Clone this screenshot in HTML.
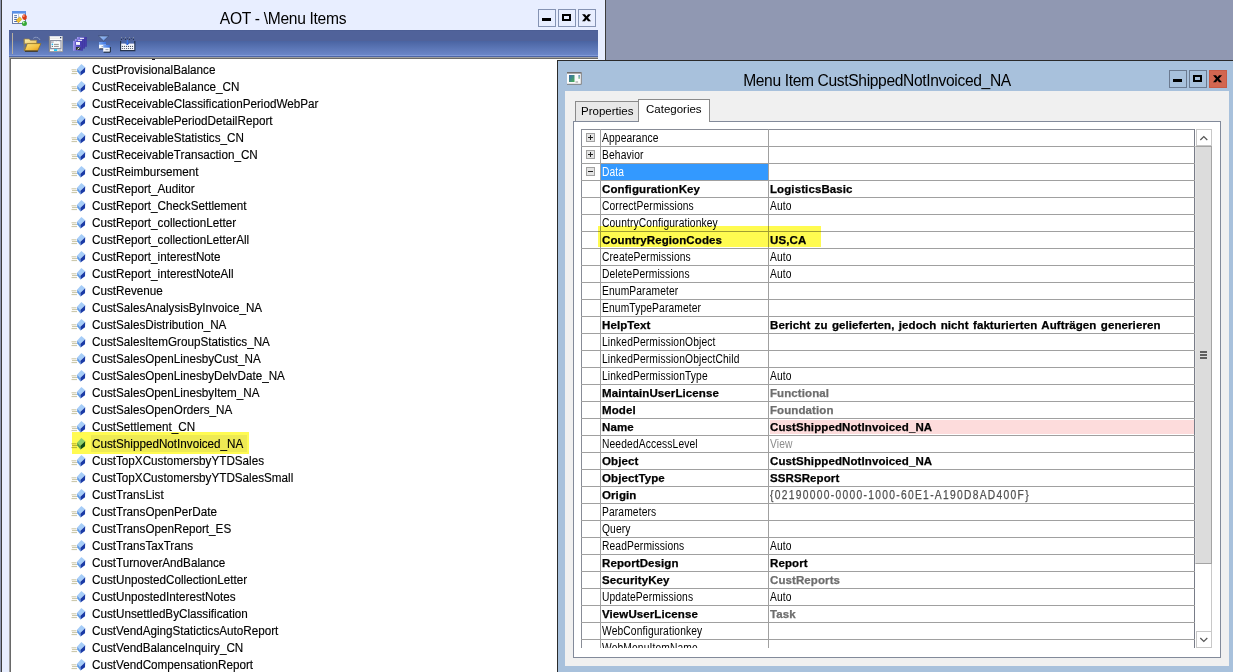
<!DOCTYPE html>
<html><head><meta charset="utf-8">
<style>
*{box-sizing:border-box}
html,body{margin:0;padding:0}
body{width:1233px;height:672px;overflow:hidden;position:relative;background:#9098b2;font-family:"Liberation Sans",sans-serif;}
div,span,svg{position:absolute}
.ic{display:block}
.li{position:absolute;left:92px;font-size:12.3px;letter-spacing:0px;transform:scaleX(0.95);transform-origin:0 0;-webkit-text-stroke:0.15px #000;line-height:17px;height:17px;white-space:nowrap;color:#000}
.g{position:absolute;font-size:12px;letter-spacing:0.15px;transform:scaleX(0.855);transform-origin:0 0;line-height:19px;height:17px;white-space:nowrap;color:#000}
.gb{font-weight:bold;font-size:11.5px;line-height:18px;letter-spacing:0.1px;word-spacing:1px;transform:none;-webkit-text-stroke:0.25px currentColor}
.gg{color:#6d6d6d}
.hl{position:absolute;left:0;width:1px;height:1px}
</style></head><body>

<div style="left:1px;top:0;width:605px;height:672px;background:#e8eeff;border-left:1px solid #3c3c3c;border-right:1px solid #3c3c3c"></div>
<svg style="left:8px;top:6px" width="24" height="24" viewBox="0 0 24 24">
<rect x="4.5" y="5.5" width="13" height="12" fill="#f6f9ff" stroke="#6a7ca8" stroke-width="1"/>
<rect x="4" y="5" width="14" height="2.6" fill="#5a90e8"/>
<rect x="5" y="8" width="5" height="9" fill="#ffffff"/>
<path d="M6.2 9.7h2.8M6.2 11.6h2.8M6.2 13.5h2.8M6.2 15.5h2.8" stroke="#4a6aa8" stroke-width="1"/>
<path d="M10.5 8v9" stroke="#b0bcd8" stroke-width="0.8"/>
<path d="M8.2 14.3L11.8 10.9L13.8 13.4L10.4 16.8Z" fill="#f0c030" stroke="#c89010" stroke-width="0.6"/>
<path d="M14.5 9.5q1.5-2 3 -0.5q2 0.5 1.2 2.5q0.5 2 -1.5 2.3q-1.8 0.5 -2.5 -1q-1.2-1.5 -0.2-3.3z" fill="#d83a18"/>
<circle cx="15.8" cy="10" r="0.9" fill="#f8a080"/>
<circle cx="16.4" cy="17.4" r="2.5" fill="#34a834"/>
<circle cx="15.6" cy="16.5" r="0.9" fill="#c8f0c0"/>
</svg>
<div style="left:0;top:9px;width:606px;text-align:center;font-size:15.6px;letter-spacing:-0.3px;line-height:20px;color:#000;padding-left:0px"><span style="position:static;margin-left:-40px">AOT - \Menu Items</span></div>
<div style="left:538px;top:9px;width:18px;height:18px;background:#e8eeff;border:1px solid #8593b3"><div style="left:3px;top:8px;width:9px;height:3px;background:#000"></div></div><div style="left:558px;top:9px;width:18px;height:18px;background:#e8eeff;border:1px solid #8593b3"><div style="left:3px;top:4px;width:9px;height:7px;border:2px solid #000;border-top-width:2px"></div></div><div style="left:578px;top:9px;width:18px;height:18px;background:#e8eeff;border:1px solid #8593b3"><svg style="left:3px;top:4px" width="9" height="8" viewBox="0 0 9 8"><path d="M0 0.2h3l1.5 2.1 1.5-2.1h3l-3 3.5 3 3.6h-3l-1.5-2.1-1.5 2.1h-3l3-3.6z" fill="#000"/></svg></div>
<div style="left:9px;top:30px;width:589px;height:27px;background:linear-gradient(#475a90 0px,#50629a 1px,#50629a 11px,#4a64a2 11px,#6b86c8 25px,#819ad8 25px,#819ad8 26px,#4e66a6 26px)"></div>
<div style="left:12px;top:33px;width:1px;height:21px;background:#b8b0a0"></div>
<svg style="left:23px;top:35px" width="20" height="18" viewBox="0 0 20 18">
<defs><linearGradient id="fb" x1="0" y1="0" x2="1" y2="1"><stop offset="0" stop-color="#fff4b0"/><stop offset="1" stop-color="#e8c060"/></linearGradient>
<linearGradient id="ff" x1="0" y1="0" x2="1" y2="1"><stop offset="0" stop-color="#fce680"/><stop offset="0.6" stop-color="#f4c040"/><stop offset="1" stop-color="#e09010"/></linearGradient></defs>
<path d="M10.5 3.2q2.5-2 5.5 0.3l0.8 1.2" stroke="#b8c4dc" fill="none" stroke-width="0.9" stroke-dasharray="1.2 0.8"/>
<path d="M1.2 4h5l1.2 1.3h6.3v3.5h-12.5z" fill="url(#fb)" stroke="#9c8448" stroke-width="0.7"/>
<path d="M1.2 4v11.8" stroke="#9c8448" stroke-width="0.8"/>
<path d="M1.5 15.8l2.8-7.2h13.6l-3.2 7.2z" fill="url(#ff)" stroke="#8a6a20" stroke-width="0.7"/>
<path d="M2 16.2h12.8" stroke="#302810" stroke-width="1"/>
</svg>
<svg style="left:48px;top:35px" width="16" height="18" viewBox="0 0 16 18">
<rect x="1" y="1.2" width="13.8" height="15.5" fill="#fbfbfb"/>
<path d="M1.3 1.2v15.5" stroke="#767676" stroke-width="1"/>
<path d="M14.5 1.2v15.5" stroke="#9a9a9a" stroke-width="0.8"/>
<path d="M1 16.6h13.8" stroke="#8a8a8a" stroke-width="0.8"/>
<path d="M2 3.2h11.5" stroke="#e4e4e4" stroke-width="1"/>
<rect x="12" y="2" width="1.3" height="1.3" fill="#304060"/>
<path d="M2.6 5.6h10.4v8h-10.4z" fill="none" stroke="#8c90a0" stroke-width="1.1"/>
<path d="M6.2 6.6h1.4M9.2 6.6h1.4" stroke="#ffffff" stroke-width="0.9"/>
<path d="M3.2 7.2h2.4" stroke="#8c90a0" stroke-width="0.9"/>
<circle cx="4.4" cy="9.4" r="0.8" fill="#18b8f8"/>
<circle cx="4.4" cy="11.4" r="0.6" fill="#707070"/>
<path d="M6 9.4h4.8M6 11.4h4.8" stroke="#909090" stroke-width="1"/>
<rect x="6" y="14.2" width="3.2" height="1.8" fill="#18c8f8"/>
<rect x="10.5" y="14.4" width="2.8" height="1.4" fill="#c8c8c8"/>
</svg>
<svg style="left:72px;top:36px" width="17" height="16" viewBox="0 0 17 16">
<defs><linearGradient id="fl" x1="0" y1="0" x2="1" y2="0"><stop offset="0" stop-color="#a8a0f0"/><stop offset="0.35" stop-color="#6a62d0"/><stop offset="1" stop-color="#3c34a0"/></linearGradient></defs>
<rect x="5" y="1" width="9.8" height="9.8" fill="url(#fl)"/>
<rect x="8" y="1.8" width="4" height="1.2" fill="#f4f4ff"/>
<rect x="2.9" y="2.9" width="10" height="9.7" fill="url(#fl)"/>
<rect x="6" y="3.8" width="4" height="1.2" fill="#f4f4ff"/>
<rect x="1" y="4.8" width="9.8" height="9.9" fill="url(#fl)"/>
<rect x="3.6" y="5.8" width="4.8" height="3.4" fill="#3a30b8"/>
<rect x="4" y="6" width="4" height="2.9" fill="#f4f4ff"/>
<rect x="4" y="11" width="4.3" height="2.9" fill="#303838"/>
<path d="M5.5 13.3l2-1.6" stroke="#e0e8e0" stroke-width="1"/>
</svg>
<svg style="left:97px;top:35px" width="15" height="18" viewBox="0 0 15 18">
<defs><linearGradient id="tb" x1="0" y1="0" x2="1" y2="1"><stop offset="0" stop-color="#a8c8f8"/><stop offset="1" stop-color="#5a88e0"/></linearGradient>
<linearGradient id="wt" x1="0" y1="0" x2="1" y2="0"><stop offset="0" stop-color="#7aa8f0"/><stop offset="1" stop-color="#3a70e0"/></linearGradient></defs>
<path d="M1.5 1h10.2l-5.1 5z" fill="url(#tb)" stroke="#34405c" stroke-width="0.6"/>
<rect x="2" y="7" width="7" height="6.8" fill="#f8faff"/>
<rect x="2" y="7" width="7" height="2.7" fill="url(#wt)"/>
<path d="M2.4 13.9h6.6" stroke="#1c2838" stroke-width="1"/>
<rect x="4.5" y="11" width="3" height="1.2" fill="#a8b0c0"/>
<rect x="6.2" y="10" width="6.8" height="6.8" fill="#f8faff"/>
<rect x="6.2" y="10" width="6.8" height="2.7" fill="url(#wt)"/>
<path d="M6.6 17.2h6.6M13.3 12v5.2" stroke="#1c2838" stroke-width="1"/>
<rect x="8.5" y="14" width="3" height="1.2" fill="#a8b0c0"/>
</svg>
<svg style="left:119px;top:36px" width="17" height="16" viewBox="0 0 17 16">
<circle cx="2.5" cy="1.5" r="0.6" fill="#8a94a8"/><circle cx="6.5" cy="1.5" r="0.6" fill="#8a94a8"/><circle cx="10.5" cy="1.5" r="0.6" fill="#8a94a8"/><circle cx="14.5" cy="1.5" r="0.6" fill="#8a94a8"/><circle cx="4.4" cy="2.5" r="0.6" fill="#3a4660"/><circle cx="8.4" cy="2.5" r="0.6" fill="#3a4660"/><circle cx="12.4" cy="2.5" r="0.6" fill="#3a4660"/><circle cx="2.5" cy="3.4" r="0.6" fill="#2a3650"/><circle cx="6.5" cy="3.4" r="0.6" fill="#2a3650"/><circle cx="10.5" cy="3.4" r="0.6" fill="#2a3650"/><circle cx="14.5" cy="3.4" r="0.6" fill="#2a3650"/>
<path d="M1.6 5v9.6h14.2v-9.6" fill="none" stroke="#26344e" stroke-width="1.2"/>
<rect x="2.2" y="7.6" width="13" height="6.4" fill="#f4f6fc"/>
<path d="M8.4 4v4.6" stroke="#3a78e8" stroke-width="1.4"/>
<path d="M6.4 6.6l2 2.4 1.6-2.4" stroke="#2a5ac8" stroke-width="1" fill="none"/>
<circle cx="3.4" cy="10.4" r="0.6" fill="#4a5262"/><circle cx="5.4" cy="10.4" r="0.6" fill="#4a5262"/><circle cx="7.5" cy="10.4" r="0.6" fill="#4a5262"/><circle cx="9.5" cy="10.4" r="0.6" fill="#4a5262"/><circle cx="11.5" cy="10.4" r="0.6" fill="#4a5262"/><circle cx="13.5" cy="10.4" r="0.6" fill="#4a5262"/><circle cx="3.4" cy="12.5" r="0.6" fill="#4a5262"/><circle cx="5.4" cy="12.5" r="0.6" fill="#4a5262"/><circle cx="7.5" cy="12.5" r="0.6" fill="#4a5262"/><circle cx="9.5" cy="12.5" r="0.6" fill="#4a5262"/><circle cx="11.5" cy="12.5" r="0.6" fill="#4a5262"/><circle cx="13.5" cy="12.5" r="0.6" fill="#4a5262"/>
</svg>
<div style="left:9px;top:57px;width:589px;height:615px;background:#fff;border-top:1px solid #a0a0a0;border-left:1px solid #a0a0a0"></div>
<div style="left:10px;top:58px;width:588px;height:614px;border-top:1px solid #696969;border-left:1px solid #696969"></div>
<div style="left:72px;top:432px;width:177px;height:22px;background:#fffb52"></div>
<div style="left:91px;top:435px;width:156px;height:17px;background:#eeea54"></div>
<svg class="ic" style="left:71px;top:64px" width="15" height="12" viewBox="0 0 15 12"><path d="M0.5 5.8h5M1 7.6h5M0.5 9.6h5.5" stroke="#c8c4a4" stroke-width="1"/><path d="M6.2 4.4L10.4 0L14.2 3.3L9.2 8Z" fill="#a6cdf8"/><path d="M9.2 8L14.2 3.3L14 8.3L9.5 11.5Z" fill="#1a3aa6"/><path d="M6.2 4.4L9.2 8L9.5 11.5L6.2 7.5Z" fill="#5e9ae6"/></svg>
<div class="li" style="top:62px">CustProvisionalBalance</div>
<svg class="ic" style="left:71px;top:81px" width="15" height="12" viewBox="0 0 15 12"><path d="M0.5 5.8h5M1 7.6h5M0.5 9.6h5.5" stroke="#c8c4a4" stroke-width="1"/><path d="M6.2 4.4L10.4 0L14.2 3.3L9.2 8Z" fill="#a6cdf8"/><path d="M9.2 8L14.2 3.3L14 8.3L9.5 11.5Z" fill="#1a3aa6"/><path d="M6.2 4.4L9.2 8L9.5 11.5L6.2 7.5Z" fill="#5e9ae6"/></svg>
<div class="li" style="top:79px">CustReceivableBalance_CN</div>
<svg class="ic" style="left:71px;top:98px" width="15" height="12" viewBox="0 0 15 12"><path d="M0.5 5.8h5M1 7.6h5M0.5 9.6h5.5" stroke="#c8c4a4" stroke-width="1"/><path d="M6.2 4.4L10.4 0L14.2 3.3L9.2 8Z" fill="#a6cdf8"/><path d="M9.2 8L14.2 3.3L14 8.3L9.5 11.5Z" fill="#1a3aa6"/><path d="M6.2 4.4L9.2 8L9.5 11.5L6.2 7.5Z" fill="#5e9ae6"/></svg>
<div class="li" style="top:96px">CustReceivableClassificationPeriodWebPar</div>
<svg class="ic" style="left:71px;top:115px" width="15" height="12" viewBox="0 0 15 12"><path d="M0.5 5.8h5M1 7.6h5M0.5 9.6h5.5" stroke="#c8c4a4" stroke-width="1"/><path d="M6.2 4.4L10.4 0L14.2 3.3L9.2 8Z" fill="#a6cdf8"/><path d="M9.2 8L14.2 3.3L14 8.3L9.5 11.5Z" fill="#1a3aa6"/><path d="M6.2 4.4L9.2 8L9.5 11.5L6.2 7.5Z" fill="#5e9ae6"/></svg>
<div class="li" style="top:113px">CustReceivablePeriodDetailReport</div>
<svg class="ic" style="left:71px;top:132px" width="15" height="12" viewBox="0 0 15 12"><path d="M0.5 5.8h5M1 7.6h5M0.5 9.6h5.5" stroke="#c8c4a4" stroke-width="1"/><path d="M6.2 4.4L10.4 0L14.2 3.3L9.2 8Z" fill="#a6cdf8"/><path d="M9.2 8L14.2 3.3L14 8.3L9.5 11.5Z" fill="#1a3aa6"/><path d="M6.2 4.4L9.2 8L9.5 11.5L6.2 7.5Z" fill="#5e9ae6"/></svg>
<div class="li" style="top:130px">CustReceivableStatistics_CN</div>
<svg class="ic" style="left:71px;top:149px" width="15" height="12" viewBox="0 0 15 12"><path d="M0.5 5.8h5M1 7.6h5M0.5 9.6h5.5" stroke="#c8c4a4" stroke-width="1"/><path d="M6.2 4.4L10.4 0L14.2 3.3L9.2 8Z" fill="#a6cdf8"/><path d="M9.2 8L14.2 3.3L14 8.3L9.5 11.5Z" fill="#1a3aa6"/><path d="M6.2 4.4L9.2 8L9.5 11.5L6.2 7.5Z" fill="#5e9ae6"/></svg>
<div class="li" style="top:147px">CustReceivableTransaction_CN</div>
<svg class="ic" style="left:71px;top:166px" width="15" height="12" viewBox="0 0 15 12"><path d="M0.5 5.8h5M1 7.6h5M0.5 9.6h5.5" stroke="#c8c4a4" stroke-width="1"/><path d="M6.2 4.4L10.4 0L14.2 3.3L9.2 8Z" fill="#a6cdf8"/><path d="M9.2 8L14.2 3.3L14 8.3L9.5 11.5Z" fill="#1a3aa6"/><path d="M6.2 4.4L9.2 8L9.5 11.5L6.2 7.5Z" fill="#5e9ae6"/></svg>
<div class="li" style="top:164px">CustReimbursement</div>
<svg class="ic" style="left:71px;top:183px" width="15" height="12" viewBox="0 0 15 12"><path d="M0.5 5.8h5M1 7.6h5M0.5 9.6h5.5" stroke="#c8c4a4" stroke-width="1"/><path d="M6.2 4.4L10.4 0L14.2 3.3L9.2 8Z" fill="#a6cdf8"/><path d="M9.2 8L14.2 3.3L14 8.3L9.5 11.5Z" fill="#1a3aa6"/><path d="M6.2 4.4L9.2 8L9.5 11.5L6.2 7.5Z" fill="#5e9ae6"/></svg>
<div class="li" style="top:181px">CustReport_Auditor</div>
<svg class="ic" style="left:71px;top:200px" width="15" height="12" viewBox="0 0 15 12"><path d="M0.5 5.8h5M1 7.6h5M0.5 9.6h5.5" stroke="#c8c4a4" stroke-width="1"/><path d="M6.2 4.4L10.4 0L14.2 3.3L9.2 8Z" fill="#a6cdf8"/><path d="M9.2 8L14.2 3.3L14 8.3L9.5 11.5Z" fill="#1a3aa6"/><path d="M6.2 4.4L9.2 8L9.5 11.5L6.2 7.5Z" fill="#5e9ae6"/></svg>
<div class="li" style="top:198px">CustReport_CheckSettlement</div>
<svg class="ic" style="left:71px;top:217px" width="15" height="12" viewBox="0 0 15 12"><path d="M0.5 5.8h5M1 7.6h5M0.5 9.6h5.5" stroke="#c8c4a4" stroke-width="1"/><path d="M6.2 4.4L10.4 0L14.2 3.3L9.2 8Z" fill="#a6cdf8"/><path d="M9.2 8L14.2 3.3L14 8.3L9.5 11.5Z" fill="#1a3aa6"/><path d="M6.2 4.4L9.2 8L9.5 11.5L6.2 7.5Z" fill="#5e9ae6"/></svg>
<div class="li" style="top:215px">CustReport_collectionLetter</div>
<svg class="ic" style="left:71px;top:234px" width="15" height="12" viewBox="0 0 15 12"><path d="M0.5 5.8h5M1 7.6h5M0.5 9.6h5.5" stroke="#c8c4a4" stroke-width="1"/><path d="M6.2 4.4L10.4 0L14.2 3.3L9.2 8Z" fill="#a6cdf8"/><path d="M9.2 8L14.2 3.3L14 8.3L9.5 11.5Z" fill="#1a3aa6"/><path d="M6.2 4.4L9.2 8L9.5 11.5L6.2 7.5Z" fill="#5e9ae6"/></svg>
<div class="li" style="top:232px">CustReport_collectionLetterAll</div>
<svg class="ic" style="left:71px;top:251px" width="15" height="12" viewBox="0 0 15 12"><path d="M0.5 5.8h5M1 7.6h5M0.5 9.6h5.5" stroke="#c8c4a4" stroke-width="1"/><path d="M6.2 4.4L10.4 0L14.2 3.3L9.2 8Z" fill="#a6cdf8"/><path d="M9.2 8L14.2 3.3L14 8.3L9.5 11.5Z" fill="#1a3aa6"/><path d="M6.2 4.4L9.2 8L9.5 11.5L6.2 7.5Z" fill="#5e9ae6"/></svg>
<div class="li" style="top:249px">CustReport_interestNote</div>
<svg class="ic" style="left:71px;top:268px" width="15" height="12" viewBox="0 0 15 12"><path d="M0.5 5.8h5M1 7.6h5M0.5 9.6h5.5" stroke="#c8c4a4" stroke-width="1"/><path d="M6.2 4.4L10.4 0L14.2 3.3L9.2 8Z" fill="#a6cdf8"/><path d="M9.2 8L14.2 3.3L14 8.3L9.5 11.5Z" fill="#1a3aa6"/><path d="M6.2 4.4L9.2 8L9.5 11.5L6.2 7.5Z" fill="#5e9ae6"/></svg>
<div class="li" style="top:266px">CustReport_interestNoteAll</div>
<svg class="ic" style="left:71px;top:285px" width="15" height="12" viewBox="0 0 15 12"><path d="M0.5 5.8h5M1 7.6h5M0.5 9.6h5.5" stroke="#c8c4a4" stroke-width="1"/><path d="M6.2 4.4L10.4 0L14.2 3.3L9.2 8Z" fill="#a6cdf8"/><path d="M9.2 8L14.2 3.3L14 8.3L9.5 11.5Z" fill="#1a3aa6"/><path d="M6.2 4.4L9.2 8L9.5 11.5L6.2 7.5Z" fill="#5e9ae6"/></svg>
<div class="li" style="top:283px">CustRevenue</div>
<svg class="ic" style="left:71px;top:302px" width="15" height="12" viewBox="0 0 15 12"><path d="M0.5 5.8h5M1 7.6h5M0.5 9.6h5.5" stroke="#c8c4a4" stroke-width="1"/><path d="M6.2 4.4L10.4 0L14.2 3.3L9.2 8Z" fill="#a6cdf8"/><path d="M9.2 8L14.2 3.3L14 8.3L9.5 11.5Z" fill="#1a3aa6"/><path d="M6.2 4.4L9.2 8L9.5 11.5L6.2 7.5Z" fill="#5e9ae6"/></svg>
<div class="li" style="top:300px">CustSalesAnalysisByInvoice_NA</div>
<svg class="ic" style="left:71px;top:319px" width="15" height="12" viewBox="0 0 15 12"><path d="M0.5 5.8h5M1 7.6h5M0.5 9.6h5.5" stroke="#c8c4a4" stroke-width="1"/><path d="M6.2 4.4L10.4 0L14.2 3.3L9.2 8Z" fill="#a6cdf8"/><path d="M9.2 8L14.2 3.3L14 8.3L9.5 11.5Z" fill="#1a3aa6"/><path d="M6.2 4.4L9.2 8L9.5 11.5L6.2 7.5Z" fill="#5e9ae6"/></svg>
<div class="li" style="top:317px">CustSalesDistribution_NA</div>
<svg class="ic" style="left:71px;top:336px" width="15" height="12" viewBox="0 0 15 12"><path d="M0.5 5.8h5M1 7.6h5M0.5 9.6h5.5" stroke="#c8c4a4" stroke-width="1"/><path d="M6.2 4.4L10.4 0L14.2 3.3L9.2 8Z" fill="#a6cdf8"/><path d="M9.2 8L14.2 3.3L14 8.3L9.5 11.5Z" fill="#1a3aa6"/><path d="M6.2 4.4L9.2 8L9.5 11.5L6.2 7.5Z" fill="#5e9ae6"/></svg>
<div class="li" style="top:334px">CustSalesItemGroupStatistics_NA</div>
<svg class="ic" style="left:71px;top:353px" width="15" height="12" viewBox="0 0 15 12"><path d="M0.5 5.8h5M1 7.6h5M0.5 9.6h5.5" stroke="#c8c4a4" stroke-width="1"/><path d="M6.2 4.4L10.4 0L14.2 3.3L9.2 8Z" fill="#a6cdf8"/><path d="M9.2 8L14.2 3.3L14 8.3L9.5 11.5Z" fill="#1a3aa6"/><path d="M6.2 4.4L9.2 8L9.5 11.5L6.2 7.5Z" fill="#5e9ae6"/></svg>
<div class="li" style="top:351px">CustSalesOpenLinesbyCust_NA</div>
<svg class="ic" style="left:71px;top:370px" width="15" height="12" viewBox="0 0 15 12"><path d="M0.5 5.8h5M1 7.6h5M0.5 9.6h5.5" stroke="#c8c4a4" stroke-width="1"/><path d="M6.2 4.4L10.4 0L14.2 3.3L9.2 8Z" fill="#a6cdf8"/><path d="M9.2 8L14.2 3.3L14 8.3L9.5 11.5Z" fill="#1a3aa6"/><path d="M6.2 4.4L9.2 8L9.5 11.5L6.2 7.5Z" fill="#5e9ae6"/></svg>
<div class="li" style="top:368px">CustSalesOpenLinesbyDelvDate_NA</div>
<svg class="ic" style="left:71px;top:387px" width="15" height="12" viewBox="0 0 15 12"><path d="M0.5 5.8h5M1 7.6h5M0.5 9.6h5.5" stroke="#c8c4a4" stroke-width="1"/><path d="M6.2 4.4L10.4 0L14.2 3.3L9.2 8Z" fill="#a6cdf8"/><path d="M9.2 8L14.2 3.3L14 8.3L9.5 11.5Z" fill="#1a3aa6"/><path d="M6.2 4.4L9.2 8L9.5 11.5L6.2 7.5Z" fill="#5e9ae6"/></svg>
<div class="li" style="top:385px">CustSalesOpenLinesbyItem_NA</div>
<svg class="ic" style="left:71px;top:404px" width="15" height="12" viewBox="0 0 15 12"><path d="M0.5 5.8h5M1 7.6h5M0.5 9.6h5.5" stroke="#c8c4a4" stroke-width="1"/><path d="M6.2 4.4L10.4 0L14.2 3.3L9.2 8Z" fill="#a6cdf8"/><path d="M9.2 8L14.2 3.3L14 8.3L9.5 11.5Z" fill="#1a3aa6"/><path d="M6.2 4.4L9.2 8L9.5 11.5L6.2 7.5Z" fill="#5e9ae6"/></svg>
<div class="li" style="top:402px">CustSalesOpenOrders_NA</div>
<svg class="ic" style="left:71px;top:421px" width="15" height="12" viewBox="0 0 15 12"><path d="M0.5 5.8h5M1 7.6h5M0.5 9.6h5.5" stroke="#c8c4a4" stroke-width="1"/><path d="M6.2 4.4L10.4 0L14.2 3.3L9.2 8Z" fill="#a6cdf8"/><path d="M9.2 8L14.2 3.3L14 8.3L9.5 11.5Z" fill="#1a3aa6"/><path d="M6.2 4.4L9.2 8L9.5 11.5L6.2 7.5Z" fill="#5e9ae6"/></svg>
<div class="li" style="top:419px">CustSettlement_CN</div>
<svg class="ic" style="left:71px;top:438px" width="15" height="12" viewBox="0 0 15 12"><path d="M0.5 5.8h5M1 7.6h5M0.5 9.6h5.5" stroke="#b8b030" stroke-width="1"/><path d="M6.2 4.4L10.4 0L14.2 3.3L9.2 8Z" fill="#8ccf6a"/><path d="M9.2 8L14.2 3.3L14 8.3L9.5 11.5Z" fill="#0f4a1c"/><path d="M6.2 4.4L9.2 8L9.5 11.5L6.2 7.5Z" fill="#4e9a48"/></svg>
<div class="li" style="top:436px">CustShippedNotInvoiced_NA</div>
<svg class="ic" style="left:71px;top:455px" width="15" height="12" viewBox="0 0 15 12"><path d="M0.5 5.8h5M1 7.6h5M0.5 9.6h5.5" stroke="#c8c4a4" stroke-width="1"/><path d="M6.2 4.4L10.4 0L14.2 3.3L9.2 8Z" fill="#a6cdf8"/><path d="M9.2 8L14.2 3.3L14 8.3L9.5 11.5Z" fill="#1a3aa6"/><path d="M6.2 4.4L9.2 8L9.5 11.5L6.2 7.5Z" fill="#5e9ae6"/></svg>
<div class="li" style="top:453px">CustTopXCustomersbyYTDSales</div>
<svg class="ic" style="left:71px;top:472px" width="15" height="12" viewBox="0 0 15 12"><path d="M0.5 5.8h5M1 7.6h5M0.5 9.6h5.5" stroke="#c8c4a4" stroke-width="1"/><path d="M6.2 4.4L10.4 0L14.2 3.3L9.2 8Z" fill="#a6cdf8"/><path d="M9.2 8L14.2 3.3L14 8.3L9.5 11.5Z" fill="#1a3aa6"/><path d="M6.2 4.4L9.2 8L9.5 11.5L6.2 7.5Z" fill="#5e9ae6"/></svg>
<div class="li" style="top:470px">CustTopXCustomersbyYTDSalesSmall</div>
<svg class="ic" style="left:71px;top:489px" width="15" height="12" viewBox="0 0 15 12"><path d="M0.5 5.8h5M1 7.6h5M0.5 9.6h5.5" stroke="#c8c4a4" stroke-width="1"/><path d="M6.2 4.4L10.4 0L14.2 3.3L9.2 8Z" fill="#a6cdf8"/><path d="M9.2 8L14.2 3.3L14 8.3L9.5 11.5Z" fill="#1a3aa6"/><path d="M6.2 4.4L9.2 8L9.5 11.5L6.2 7.5Z" fill="#5e9ae6"/></svg>
<div class="li" style="top:487px">CustTransList</div>
<svg class="ic" style="left:71px;top:506px" width="15" height="12" viewBox="0 0 15 12"><path d="M0.5 5.8h5M1 7.6h5M0.5 9.6h5.5" stroke="#c8c4a4" stroke-width="1"/><path d="M6.2 4.4L10.4 0L14.2 3.3L9.2 8Z" fill="#a6cdf8"/><path d="M9.2 8L14.2 3.3L14 8.3L9.5 11.5Z" fill="#1a3aa6"/><path d="M6.2 4.4L9.2 8L9.5 11.5L6.2 7.5Z" fill="#5e9ae6"/></svg>
<div class="li" style="top:504px">CustTransOpenPerDate</div>
<svg class="ic" style="left:71px;top:523px" width="15" height="12" viewBox="0 0 15 12"><path d="M0.5 5.8h5M1 7.6h5M0.5 9.6h5.5" stroke="#c8c4a4" stroke-width="1"/><path d="M6.2 4.4L10.4 0L14.2 3.3L9.2 8Z" fill="#a6cdf8"/><path d="M9.2 8L14.2 3.3L14 8.3L9.5 11.5Z" fill="#1a3aa6"/><path d="M6.2 4.4L9.2 8L9.5 11.5L6.2 7.5Z" fill="#5e9ae6"/></svg>
<div class="li" style="top:521px">CustTransOpenReport_ES</div>
<svg class="ic" style="left:71px;top:540px" width="15" height="12" viewBox="0 0 15 12"><path d="M0.5 5.8h5M1 7.6h5M0.5 9.6h5.5" stroke="#c8c4a4" stroke-width="1"/><path d="M6.2 4.4L10.4 0L14.2 3.3L9.2 8Z" fill="#a6cdf8"/><path d="M9.2 8L14.2 3.3L14 8.3L9.5 11.5Z" fill="#1a3aa6"/><path d="M6.2 4.4L9.2 8L9.5 11.5L6.2 7.5Z" fill="#5e9ae6"/></svg>
<div class="li" style="top:538px">CustTransTaxTrans</div>
<svg class="ic" style="left:71px;top:557px" width="15" height="12" viewBox="0 0 15 12"><path d="M0.5 5.8h5M1 7.6h5M0.5 9.6h5.5" stroke="#c8c4a4" stroke-width="1"/><path d="M6.2 4.4L10.4 0L14.2 3.3L9.2 8Z" fill="#a6cdf8"/><path d="M9.2 8L14.2 3.3L14 8.3L9.5 11.5Z" fill="#1a3aa6"/><path d="M6.2 4.4L9.2 8L9.5 11.5L6.2 7.5Z" fill="#5e9ae6"/></svg>
<div class="li" style="top:555px">CustTurnoverAndBalance</div>
<svg class="ic" style="left:71px;top:574px" width="15" height="12" viewBox="0 0 15 12"><path d="M0.5 5.8h5M1 7.6h5M0.5 9.6h5.5" stroke="#c8c4a4" stroke-width="1"/><path d="M6.2 4.4L10.4 0L14.2 3.3L9.2 8Z" fill="#a6cdf8"/><path d="M9.2 8L14.2 3.3L14 8.3L9.5 11.5Z" fill="#1a3aa6"/><path d="M6.2 4.4L9.2 8L9.5 11.5L6.2 7.5Z" fill="#5e9ae6"/></svg>
<div class="li" style="top:572px">CustUnpostedCollectionLetter</div>
<svg class="ic" style="left:71px;top:591px" width="15" height="12" viewBox="0 0 15 12"><path d="M0.5 5.8h5M1 7.6h5M0.5 9.6h5.5" stroke="#c8c4a4" stroke-width="1"/><path d="M6.2 4.4L10.4 0L14.2 3.3L9.2 8Z" fill="#a6cdf8"/><path d="M9.2 8L14.2 3.3L14 8.3L9.5 11.5Z" fill="#1a3aa6"/><path d="M6.2 4.4L9.2 8L9.5 11.5L6.2 7.5Z" fill="#5e9ae6"/></svg>
<div class="li" style="top:589px">CustUnpostedInterestNotes</div>
<svg class="ic" style="left:71px;top:608px" width="15" height="12" viewBox="0 0 15 12"><path d="M0.5 5.8h5M1 7.6h5M0.5 9.6h5.5" stroke="#c8c4a4" stroke-width="1"/><path d="M6.2 4.4L10.4 0L14.2 3.3L9.2 8Z" fill="#a6cdf8"/><path d="M9.2 8L14.2 3.3L14 8.3L9.5 11.5Z" fill="#1a3aa6"/><path d="M6.2 4.4L9.2 8L9.5 11.5L6.2 7.5Z" fill="#5e9ae6"/></svg>
<div class="li" style="top:606px">CustUnsettledByClassification</div>
<svg class="ic" style="left:71px;top:625px" width="15" height="12" viewBox="0 0 15 12"><path d="M0.5 5.8h5M1 7.6h5M0.5 9.6h5.5" stroke="#c8c4a4" stroke-width="1"/><path d="M6.2 4.4L10.4 0L14.2 3.3L9.2 8Z" fill="#a6cdf8"/><path d="M9.2 8L14.2 3.3L14 8.3L9.5 11.5Z" fill="#1a3aa6"/><path d="M6.2 4.4L9.2 8L9.5 11.5L6.2 7.5Z" fill="#5e9ae6"/></svg>
<div class="li" style="top:623px">CustVendAgingStaticticsAutoReport</div>
<svg class="ic" style="left:71px;top:642px" width="15" height="12" viewBox="0 0 15 12"><path d="M0.5 5.8h5M1 7.6h5M0.5 9.6h5.5" stroke="#c8c4a4" stroke-width="1"/><path d="M6.2 4.4L10.4 0L14.2 3.3L9.2 8Z" fill="#a6cdf8"/><path d="M9.2 8L14.2 3.3L14 8.3L9.5 11.5Z" fill="#1a3aa6"/><path d="M6.2 4.4L9.2 8L9.5 11.5L6.2 7.5Z" fill="#5e9ae6"/></svg>
<div class="li" style="top:640px">CustVendBalanceInquiry_CN</div>
<svg class="ic" style="left:71px;top:659px" width="15" height="12" viewBox="0 0 15 12"><path d="M0.5 5.8h5M1 7.6h5M0.5 9.6h5.5" stroke="#c8c4a4" stroke-width="1"/><path d="M6.2 4.4L10.4 0L14.2 3.3L9.2 8Z" fill="#a6cdf8"/><path d="M9.2 8L14.2 3.3L14 8.3L9.5 11.5Z" fill="#1a3aa6"/><path d="M6.2 4.4L9.2 8L9.5 11.5L6.2 7.5Z" fill="#5e9ae6"/></svg>
<div class="li" style="top:657px">CustVendCompensationReport</div>
<div style="left:152px;top:59px;width:3px;height:1px;background:#1a1a2a"></div>
<div style="left:557px;top:60px;width:676px;height:612px;background:#a8c1dc;border-left:1px solid #2a2a2a;border-top:1px solid #2a2a2a"></div>
<svg style="left:566px;top:71px" width="17" height="15" viewBox="0 0 17 15">
<rect x="1" y="1" width="14.5" height="12" fill="#fafafa"/>
<rect x="1" y="1" width="14.5" height="1.6" fill="#707070"/>
<path d="M15.3 1.5v11.8h-14.3" stroke="#808080" fill="none" stroke-width="1"/>
<defs><linearGradient id="gg" x1="0" y1="0" x2="1" y2="1"><stop offset="0" stop-color="#3a6ab0"/><stop offset="1" stop-color="#48b050"/></linearGradient>
<linearGradient id="gg2" x1="0" y1="0" x2="0" y2="1"><stop offset="0" stop-color="#2050b0"/><stop offset="1" stop-color="#40b040"/></linearGradient></defs>
<rect x="3" y="4" width="5.5" height="7" fill="url(#gg)"/>
<rect x="12.6" y="4" width="1" height="3.8" fill="url(#gg2)"/>
<rect x="9.5" y="10" width="2.6" height="2" fill="#c8c8c8"/>
</svg>
<div style="left:557px;top:71px;width:640px;text-align:center;font-size:15.6px;letter-spacing:-0.35px;line-height:20px;color:#000"><span style="position:static;margin-left:0px">Menu Item CustShippedNotInvoiced_NA</span></div>
<div style="left:1169px;top:70px;width:18px;height:18px;background:#a8c1dc;border:1px solid #6b7a90"><div style="left:3px;top:8px;width:9px;height:3px;background:#000"></div></div><div style="left:1189px;top:70px;width:18px;height:18px;background:#a8c1dc;border:1px solid #6b7a90"><div style="left:3px;top:4px;width:9px;height:7px;border:2px solid #000;border-top-width:2px"></div></div><div style="left:1209px;top:70px;width:18px;height:18px;background:#d26650;border:1px solid #c85a44"><svg style="left:3px;top:4px" width="9" height="8" viewBox="0 0 9 8"><path d="M0 0.2h3l1.5 2.1 1.5-2.1h3l-3 3.5 3 3.6h-3l-1.5-2.1-1.5 2.1h-3l3-3.6z" fill="#000"/></svg></div>
<div style="left:565px;top:91px;width:664px;height:575px;background:#f0f0f0"></div>
<div style="left:575px;top:101px;width:64px;height:21px;background:#e8e8e8;border:1px solid #8a8a8a;border-bottom:none"></div>
<div style="left:581px;top:103px;font-size:11.5px;line-height:17px;color:#000">Properties</div>
<div style="left:573px;top:121px;width:648px;height:537px;background:#fff;border:1px solid #828a9a"></div>
<div style="left:638px;top:99px;width:72px;height:23px;background:#fff;border:1px solid #8a8a8a;border-bottom:none"></div>
<div style="left:646px;top:101px;font-size:11.5px;line-height:17px;color:#000">Categories</div>
<div style="left:581px;top:129px;width:614px;height:519px;overflow:hidden;background:#fff">
<div style="left:0;top:0;width:1px;height:520px;background:#888c96"></div><div style="left:0;top:0;width:614px;height:1px;background:#888c96"></div><div style="left:19px;top:0;width:1px;height:520px;background:#a0a0a0"></div><div style="left:187px;top:0;width:1px;height:520px;background:#a0a0a0"></div><div style="left:613px;top:0;width:1px;height:520px;background:#787c88"></div><div style="left:0;top:17px;width:614px;height:1px;background:#a0a0a0"></div><div style="left:5px;top:4px;width:9px;height:9px;background:#e4e4e4;border:1px solid #a0a0a0"></div><div style="left:7px;top:8px;width:5px;height:1px;background:#202020"></div><div style="left:9px;top:6px;width:1px;height:5px;background:#202020"></div><div class="g" style="left:21px;top:0px">Appearance</div><div style="left:0;top:34px;width:614px;height:1px;background:#a0a0a0"></div><div style="left:5px;top:21px;width:9px;height:9px;background:#e4e4e4;border:1px solid #a0a0a0"></div><div style="left:7px;top:25px;width:5px;height:1px;background:#202020"></div><div style="left:9px;top:23px;width:1px;height:5px;background:#202020"></div><div class="g" style="left:21px;top:17px">Behavior</div><div style="left:0;top:51px;width:614px;height:1px;background:#a0a0a0"></div><div style="left:20px;top:35px;width:167px;height:16px;background:#3399ff"></div><div style="left:5px;top:38px;width:9px;height:9px;background:#e4e4e4;border:1px solid #a0a0a0"></div><div style="left:7px;top:42px;width:5px;height:1px;background:#202020"></div><div class="g" style="left:21px;top:34px;color:#fff">Data</div><div style="left:0;top:68px;width:614px;height:1px;background:#a0a0a0"></div><div class="g gb" style="left:21px;top:51px">ConfigurationKey</div><div class="g gb" style="left:189px;top:51px">LogisticsBasic</div><div style="left:0;top:85px;width:614px;height:1px;background:#a0a0a0"></div><div class="g" style="left:21px;top:68px">CorrectPermissions</div><div class="g" style="left:189px;top:68px">Auto</div><div style="left:0;top:102px;width:614px;height:1px;background:#a0a0a0"></div><div class="g" style="left:21px;top:85px">CountryConfigurationkey</div><div style="left:0;top:119px;width:614px;height:1px;background:#a0a0a0"></div><div style="left:17px;top:97px;width:223px;height:21px;background:#fffb50;mix-blend-mode:multiply;z-index:5"></div><div class="g gb" style="left:21px;top:102px">CountryRegionCodes</div><div class="g gb" style="left:189px;top:102px">US,CA</div><div style="left:0;top:136px;width:614px;height:1px;background:#a0a0a0"></div><div class="g" style="left:21px;top:119px">CreatePermissions</div><div class="g" style="left:189px;top:119px">Auto</div><div style="left:0;top:153px;width:614px;height:1px;background:#a0a0a0"></div><div class="g" style="left:21px;top:136px">DeletePermissions</div><div class="g" style="left:189px;top:136px">Auto</div><div style="left:0;top:170px;width:614px;height:1px;background:#a0a0a0"></div><div class="g" style="left:21px;top:153px">EnumParameter</div><div style="left:0;top:187px;width:614px;height:1px;background:#a0a0a0"></div><div class="g" style="left:21px;top:170px">EnumTypeParameter</div><div style="left:0;top:204px;width:614px;height:1px;background:#a0a0a0"></div><div class="g gb" style="left:21px;top:187px">HelpText</div><div class="g gb" style="left:189px;top:187px">Bericht zu gelieferten, jedoch nicht fakturierten Aufträgen generieren</div><div style="left:0;top:221px;width:614px;height:1px;background:#a0a0a0"></div><div class="g" style="left:21px;top:204px">LinkedPermissionObject</div><div style="left:0;top:238px;width:614px;height:1px;background:#a0a0a0"></div><div class="g" style="left:21px;top:221px">LinkedPermissionObjectChild</div><div style="left:0;top:255px;width:614px;height:1px;background:#a0a0a0"></div><div class="g" style="left:21px;top:238px">LinkedPermissionType</div><div class="g" style="left:189px;top:238px">Auto</div><div style="left:0;top:272px;width:614px;height:1px;background:#a0a0a0"></div><div class="g gb" style="left:21px;top:255px">MaintainUserLicense</div><div class="g gb gg" style="left:189px;top:255px">Functional</div><div style="left:0;top:289px;width:614px;height:1px;background:#a0a0a0"></div><div class="g gb" style="left:21px;top:272px">Model</div><div class="g gb gg" style="left:189px;top:272px">Foundation</div><div style="left:0;top:306px;width:614px;height:1px;background:#a0a0a0"></div><div style="left:189px;top:291px;width:424px;height:14px;background:#fddcdc"></div><div class="g gb" style="left:21px;top:289px">Name</div><div class="g gb" style="left:189px;top:289px">CustShippedNotInvoiced_NA</div><div style="left:0;top:323px;width:614px;height:1px;background:#a0a0a0"></div><div class="g" style="left:21px;top:306px">NeededAccessLevel</div><div class="g gg" style="left:189px;top:306px;color:#8c8c8c">View</div><div style="left:0;top:340px;width:614px;height:1px;background:#a0a0a0"></div><div class="g gb" style="left:21px;top:323px">Object</div><div class="g gb" style="left:189px;top:323px">CustShippedNotInvoiced_NA</div><div style="left:0;top:357px;width:614px;height:1px;background:#a0a0a0"></div><div class="g gb" style="left:21px;top:340px">ObjectType</div><div class="g gb" style="left:189px;top:340px">SSRSReport</div><div style="left:0;top:374px;width:614px;height:1px;background:#a0a0a0"></div><div class="g gb" style="left:21px;top:357px">Origin</div><div class="g gg" style="left:189px;top:357px;letter-spacing:1.52px;color:#505050;-webkit-text-stroke:0.25px #505050">{02190000-0000-1000-60E1-A190D8AD400F}</div><div style="left:0;top:391px;width:614px;height:1px;background:#a0a0a0"></div><div class="g" style="left:21px;top:374px">Parameters</div><div style="left:0;top:408px;width:614px;height:1px;background:#a0a0a0"></div><div class="g" style="left:21px;top:391px">Query</div><div style="left:0;top:425px;width:614px;height:1px;background:#a0a0a0"></div><div class="g" style="left:21px;top:408px">ReadPermissions</div><div class="g" style="left:189px;top:408px">Auto</div><div style="left:0;top:442px;width:614px;height:1px;background:#a0a0a0"></div><div class="g gb" style="left:21px;top:425px">ReportDesign</div><div class="g gb" style="left:189px;top:425px">Report</div><div style="left:0;top:459px;width:614px;height:1px;background:#a0a0a0"></div><div class="g gb" style="left:21px;top:442px">SecurityKey</div><div class="g gb gg" style="left:189px;top:442px">CustReports</div><div style="left:0;top:476px;width:614px;height:1px;background:#a0a0a0"></div><div class="g" style="left:21px;top:459px">UpdatePermissions</div><div class="g" style="left:189px;top:459px">Auto</div><div style="left:0;top:493px;width:614px;height:1px;background:#a0a0a0"></div><div class="g gb" style="left:21px;top:476px">ViewUserLicense</div><div class="g gb gg" style="left:189px;top:476px">Task</div><div style="left:0;top:510px;width:614px;height:1px;background:#a0a0a0"></div><div class="g" style="left:21px;top:493px">WebConfigurationkey</div><div style="left:0;top:527px;width:614px;height:1px;background:#a0a0a0"></div><div class="g" style="left:21px;top:510px">WebMenuItemName</div>
</div>
<div style="left:1195px;top:129px;width:16px;height:519px;background:#fff"></div>
<div style="left:1196px;top:129px;width:16px;height:17px;background:#fff;border:1px solid #c8c8c8"></div>
<svg style="left:1199px;top:134px" width="10" height="8" viewBox="0 0 10 8"><path d="M1.3 6L4.8 2.5L8.3 6" stroke="#555" stroke-width="1.2" fill="none"/></svg>
<div style="left:1211px;top:146px;width:1px;height:486px;background:#c8c8c8"></div>
<div style="left:1195px;top:146px;width:17px;height:418px;background:#dcdcdc;border:1px solid #a4a4a4;border-left-color:#e4e4e4"></div>
<div style="left:1200px;top:351px;width:7px;height:2px;background:#606060"></div><div style="left:1200px;top:354px;width:7px;height:2px;background:#606060"></div><div style="left:1200px;top:357px;width:7px;height:2px;background:#606060"></div>
<div style="left:1196px;top:631px;width:16px;height:17px;background:#fff;border:1px solid #c8c8c8"></div>
<svg style="left:1199px;top:636px" width="10" height="8" viewBox="0 0 10 8"><path d="M1.3 2L4.8 5.5L8.3 2" stroke="#555" stroke-width="1.2" fill="none"/></svg>
</body></html>
